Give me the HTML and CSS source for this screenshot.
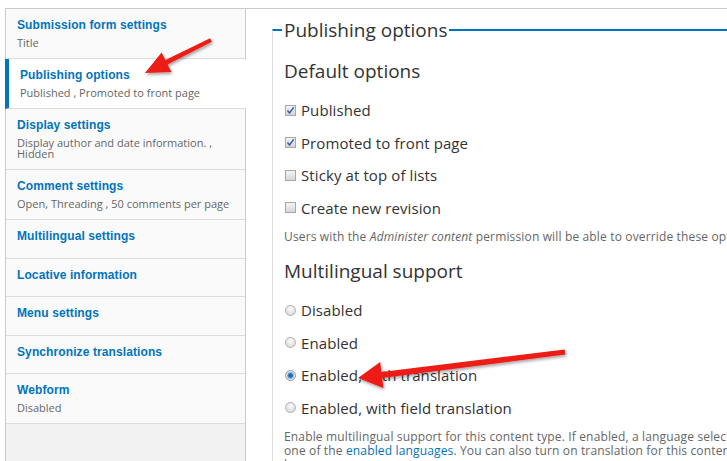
FILE: index.html
```html
<!DOCTYPE html>
<html lang="en">
<head>
    <meta charset="UTF-8">
    <meta name="viewport" content="width=device-width, initial-scale=1.0">
    <title>Content type settings</title>
    <link rel="stylesheet" href="styles.css">
</head>
<body>
    <div class="vertical-tabs">
        <ul class="tabs-list">
            <li class="tab-item">
                <a href="#"><strong class="tab-title">Submission form settings</strong><span class="tab-summary">Title</span></a>
            </li>
            <li class="tab-item selected">
                <a href="#"><strong class="tab-title">Publishing options</strong><span class="tab-summary">Published , Promoted to front page</span></a>
            </li>
            <li class="tab-item">
                <a href="#"><strong class="tab-title">Display settings</strong><span class="tab-summary">Display author and date information. , Hidden</span></a>
            </li>
            <li class="tab-item">
                <a href="#"><strong class="tab-title">Comment settings</strong><span class="tab-summary">Open, Threading , 50 comments per page</span></a>
            </li>
            <li class="tab-item plain">
                <a href="#"><strong class="tab-title">Multilingual settings</strong></a>
            </li>
            <li class="tab-item plain">
                <a href="#"><strong class="tab-title">Locative information</strong></a>
            </li>
            <li class="tab-item plain">
                <a href="#"><strong class="tab-title">Menu settings</strong></a>
            </li>
            <li class="tab-item plain">
                <a href="#"><strong class="tab-title">Synchronize translations</strong></a>
            </li>
            <li class="tab-item">
                <a href="#"><strong class="tab-title">Webform</strong><span class="tab-summary">Disabled</span></a>
            </li>
        </ul>
        <div class="tabs-panes">
            <fieldset class="pane">
                <legend>Publishing options</legend>
                <h3 class="group-title">Default options</h3>
                <div class="form-item">
                    <span class="checkbox"><svg viewBox="0 0 11 11" width="11" height="11"><path d="M2.5 5.5 L4.5 8 L8.8 2.2" fill="none" stroke="#3b63b6" stroke-width="1.6"/></svg></span>
                    <label>Published</label>
                </div>
                <div class="form-item">
                    <span class="checkbox"><svg viewBox="0 0 11 11" width="11" height="11"><path d="M2.5 5.5 L4.5 8 L8.8 2.2" fill="none" stroke="#3b63b6" stroke-width="1.6"/></svg></span>
                    <label>Promoted to front page</label>
                </div>
                <div class="form-item">
                    <span class="checkbox"></span>
                    <label>Sticky at top of lists</label>
                </div>
                <div class="form-item">
                    <span class="checkbox"></span>
                    <label>Create new revision</label>
                </div>
                <div class="description">Users with the <em>Administer content</em> permission will be able to override these options.</div>

                <h3 class="group-title">Multilingual support</h3>
                <div class="form-item">
                    <span class="radio"></span>
                    <label>Disabled</label>
                </div>
                <div class="form-item">
                    <span class="radio"></span>
                    <label>Enabled</label>
                </div>
                <div class="form-item">
                    <span class="radio checked"></span>
                    <label>Enabled, with translation</label>
                </div>
                <div class="form-item">
                    <span class="radio"></span>
                    <label>Enabled, with field translation</label>
                </div>
                <div class="description wide">Enable multilingual support for this content type. If enabled, a language selection field will be added to the editing form, allowing you to select from one of the <a href="#">enabled languages</a>. You can also turn on translation for this content type, which lets you have content translated to any of the installed languages.</div>
            </fieldset>
        </div>
    </div>

    <!-- annotation arrows drawn over the screenshot -->
    <svg class="arrows" width="727" height="461" viewBox="0 0 727 461">
        <defs>
            <filter id="shadow" x="-20%" y="-20%" width="140%" height="160%">
                <feDropShadow dx="1" dy="2" stdDeviation="1.5" flood-color="#000" flood-opacity="0.35"/>
            </filter>
        </defs>
        <polygon filter="url(#shadow)" fill="#ee1c14" points="145,73 171.4,72.1 167.6,64.5 211.9,41.8 210.1,38.2 165.4,60.1 161.6,52.5"/>
        <polygon filter="url(#shadow)" fill="#ee1c14" points="358,378 383.4,387.9 382.2,378 565.3,354.5 564.7,349.5 381.4,372 380.2,362.1"/>
    </svg>
</body>
</html>
```

FILE: styles.css
```css
html, body {
    margin: 0;
    height: 100%;
    overflow: hidden;
}
body {
    background-color: #fff;
    font-family: "Open Sans", "Liberation Sans", sans-serif;
    color: #333;
    position: relative;
}
.vertical-tabs {
    display: flex;
    margin: 8px 0 0 5px;
    width: 1100px;
    min-height: 460px;
    border-top: 1px solid #ccc;
    border-left: 1px solid #ccc;
}
.tabs-list {
    list-style: none;
    margin: 0;
    padding: 0;
    width: 239px;
    flex-shrink: 0;
    background-color: #f2f2f2;
    border-right: 1px solid #ccc;
}
.tab-item {
    background-color: #fafafa;
    border-bottom: 1px solid #ddd;
}
.tab-item a {
    display: block;
    padding: 8px 10px 10px 11px;
    text-decoration: none;
}
.tab-item.plain a {
    padding-bottom: 13.5px;
}
.tab-item.selected {
    background-color: #fff;
    border-left: 4px solid #0074bd;
    margin-left: -1px;
    margin-right: -1px;
    position: relative;
}
.tab-item.selected a {
    padding-left: 11px;
}
.tab-title {
    display: block;
    font-family: "Liberation Sans", Arial, sans-serif;
    font-weight: bold;
    font-size: 12px;
    line-height: 16px;
    color: #0074bd;
    letter-spacing: 0.1px;
}
.tab-summary {
    display: block;
    margin-top: 4px;
    font-size: 11px;
    line-height: 11px;
    color: #666;
}
.tabs-panes {
    flex: 1;
    padding: 9px 0 0 26px;
}
.pane {
    margin: 0;
    padding: 0 0 20px 11px;
    border: none;
    border-top: 2px solid #0074bd;
    border-left: 1px solid #ddd;
    min-width: 0;
}
.pane legend {
    padding: 0 2px;
    margin-left: -2px;
    font-size: 19px;
    line-height: 24px;
    color: #333;
}
.group-title {
    margin: 15px 0 17px 0;
    font-size: 19px;
    font-weight: normal;
    line-height: 24px;
}
.group-title:first-of-type {
    margin-top: 17px;
}
.form-item {
    display: flex;
    align-items: center;
    height: 20px;
    margin-bottom: 12.5px;
}
.form-item label {
    font-size: 15px;
    line-height: 20px;
    margin-left: 5px;
    letter-spacing: 0.1px;
}
.checkbox {
    width: 11px;
    height: 11px;
    box-sizing: border-box;
    border: 1px solid #a8a8a8;
    background: linear-gradient(#f4f4f4, #d6d6d6);
    display: flex;
    align-items: center;
    justify-content: center;
    margin-left: 1px;
}
.checkbox svg {
    flex-shrink: 0;
}
.radio {
    width: 11px;
    height: 11px;
    box-sizing: border-box;
    border: 1px solid #b0b0b0;
    border-radius: 50%;
    background: radial-gradient(circle at 50% 35%, #fafafa, #d4d4d4);
    margin-left: 1px;
}
.radio.checked {
    background: radial-gradient(circle at 50% 50%, #1e5d9c 0, #2d79c0 2px, #9ec3e6 3.2px, #e6e6e6 4px);
    border-color: #8a9bb0;
}
.description {
    font-size: 12px;
    line-height: 14px;
    color: #666;
    margin: 0 0 15px 0;
    letter-spacing: 0.15px;
}
.description.wide {
    width: 855px;
}
.description em {
    font-style: italic;
}
.description a {
    color: #0074bd;
    text-decoration: none;
}
.arrows {
    position: absolute;
    left: 0;
    top: 0;
    pointer-events: none;
}
```
